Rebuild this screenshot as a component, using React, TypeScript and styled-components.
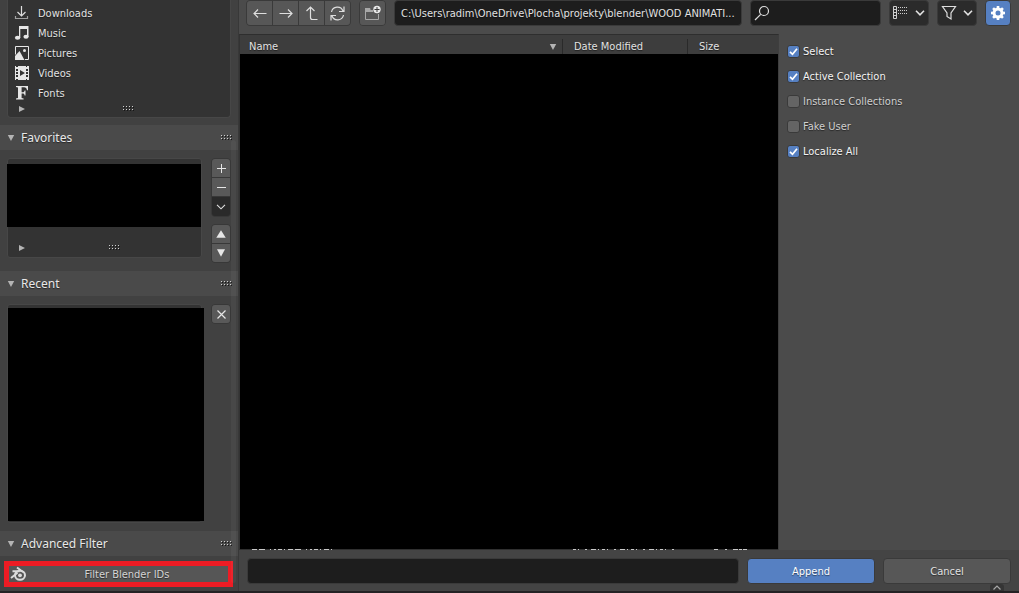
import React from "react";
import styled, { createGlobalStyle, css } from "styled-components";

const Global = createGlobalStyle`
  * { box-sizing: border-box; }
  body {
    margin: 0;
    background: #4b4b4b;
    color: #e2e2e2;
    font-family: "DejaVu Sans Condensed", "DejaVu Sans", sans-serif;
    font-stretch: condensed;
    font-size: 11px;
    line-height: 17px;
    text-shadow: 0 1px 1px rgba(0, 0, 0, 0.5);
  }
  button, input { font: inherit; color: inherit; text-shadow: inherit; }
  button { padding: 0; border: 0; background: none; }
  ul { list-style: none; margin: 0; padding: 0; }
  h2 { margin: 0; font: inherit; }
  svg { display: block; flex: none; }
`;

const Window = styled.div`
  display: grid;
  grid-template-columns: 239px minmax(0, 1fr);
  min-height: 100vh;
  border-bottom: 2px solid #242224;
`;

/* Sidebar */

const Sidebar = styled.aside`
  position: relative;
  display: flex;
  flex-direction: column;
  background: #414141;
  border-right: 1px solid #383838;
`;

const Scrollbar = styled.div`
  position: absolute;
  top: 140px;
  bottom: 8px;
  right: 2px;
  width: 5px;
  border-radius: 3px;
  background: rgba(255, 255, 255, 0.04);
`;

const listBox = css`
  background: #333333;
  border: 1px solid #474747;
  border-radius: 3px;
`;

const Bookmarks = styled.div`
  ${listBox}
  border-top: 0;
  border-radius: 0 0 4px 4px;
  margin: 0 7px 7px;
  padding: 3px 0 0 6px;
  height: 118px;
`;

const Place = styled.button`
  display: flex;
  align-items: center;
  gap: 9px;
  width: 100%;
  height: 20px;
  text-align: left;
`;

const ListFooter = styled.div`
  display: flex;
  align-items: center;
  height: 11px;
  padding-left: 4px;
`;

const GripSlot = styled.span<{ $offset: number }>`
  margin-left: ${(p) => p.$offset}px;
`;

const PanelHeader = styled.div`
  display: flex;
  align-items: center;
  justify-content: space-between;
  height: 25px;
  padding: 1px 6px 0 7px;
  background: #4a4a4a;
`;

const PanelToggle = styled.button`
  display: flex;
  align-items: center;
  gap: 6px;
  font-family: "Noto Sans", "Open Sans", sans-serif;
  font-size: 12px;
  line-height: 18px;
  color: #e8e8e8;
`;

const PanelBody = styled.div<{ $grow?: boolean }>`
  display: flex;
  flex: ${(p) => (p.$grow ? "1 0 auto" : "none")};
  align-items: ${(p) => (p.$grow ? "stretch" : "flex-start")};
  gap: 9px;
  padding: 8px 7px;
`;

const FavoritesBox = styled.div`
  ${listBox}
  flex: 1;
  height: 100px;
  padding-top: 5px;
`;

const Redacted = styled.div`
  background: #000;
`;

const FavoritesItems = styled(Redacted)`
  height: 63px;
  margin: 0 0 15px -1px;
`;

const RecentBox = styled.div`
  ${listBox}
  display: flex;
  flex: 1;
  min-height: 217px;
  padding: 3px 0 1px;
`;

const RecentItems = styled(Redacted)`
  flex: 1;
  margin-right: -3px;
`;

const ButtonColumn = styled.div`
  display: flex;
  flex-direction: column;
  gap: 7px;
  width: 20px;
`;

const Stack = styled.div`
  display: flex;
  flex-direction: column;
  gap: 1px;
  border: 1px solid #383838;
  border-radius: 4px;
  background: #383838;
  overflow: hidden;
`;

const SmallButton = styled.button<{ $dark?: boolean }>`
  display: flex;
  align-items: center;
  justify-content: center;
  height: ${(p) => (p.$dark ? 19 : 18)}px;
  background: ${(p) => (p.$dark ? "#2a2a2a" : "#595959")};
`;

const FilterRow = styled.div`
  padding: 5px 5px 4px 4px;
`;

const FilterButton = styled.button`
  display: flex;
  align-items: center;
  width: 100%;
  height: 26px;
  padding: 0 1px;
  border: 5px solid #ed1c24;
  background: #565656;
  outline: 0;
  span { flex: 1; text-align: center; color: #d5d5d5; }
`;

/* Browser area */

const Browser = styled.main`
  display: flex;
  flex-direction: column;
  min-width: 0;
`;

const Toolbar = styled.div`
  display: flex;
  align-items: flex-start;
  gap: 8px;
  height: 34px;
  padding: 0 8px 0 7px;
`;

const control = css`
  height: 26px;
  border: 1px solid #3a3a3a;
  border-radius: 4px;
`;

const NavGroup = styled.div`
  ${control}
  display: flex;
  gap: 1px;
  background: #3a3a3a;
  overflow: hidden;
`;

const NavButton = styled.button`
  display: flex;
  align-items: center;
  justify-content: center;
  width: 25px;
  background: #575757;
`;

const PathField = styled.input`
  ${control}
  flex: 1;
  min-width: 0;
  padding: 0 6px;
  background: #1d1d1d;
  text-overflow: ellipsis;
  outline: 0;
`;

const SearchBox = styled.label`
  ${control}
  display: flex;
  align-items: center;
  width: 131px;
  padding-left: 3px;
  background: #1d1d1d;
  input { width: 100px; border: 0; background: none; outline: 0; }
`;

const MenuButton = styled.button`
  ${control}
  display: flex;
  align-items: center;
  justify-content: space-between;
  width: 40px;
  padding: 0 3px;
  background: #2b2b2b;
`;

const SettingsButton = styled.button`
  ${control}
  display: flex;
  align-items: center;
  justify-content: center;
  width: 26px;
  background: #5680c2;
`;

const Content = styled.div`
  display: grid;
  grid-template-columns: minmax(0, 9fr) minmax(0, 4fr);
  flex: 1;
`;

const FileList = styled.section`
  display: flex;
  flex-direction: column;
  border-top: 1px solid #2e2e2e;
  border-right: 1px solid #3e3e3e;
  border-left: 1px solid #333333;
  background: #303030;
`;

const Columns = styled.div`
  display: grid;
  grid-template-columns: minmax(0, 1fr) 125px 91px;
  align-items: end;
  height: 19px;
  background: #3d3d3d;
`;

const Column = styled.button<{ $first?: boolean }>`
  display: flex;
  align-items: center;
  justify-content: space-between;
  height: 15px;
  padding: 0 ${(p) => (p.$first ? 5 : 8)}px 0 ${(p) => (p.$first ? 9 : 11)}px;
  border-left: ${(p) => (p.$first ? 0 : 1)}px solid #2a2a2a;
`;

const Files = styled(Redacted)`
  flex: 1;
`;

const Options = styled.section`
  padding: 5px 0 0 8px;
`;

const Option = styled.label`
  display: flex;
  align-items: center;
  gap: 3px;
  height: 25px;
`;

const Check = styled.input`
  appearance: none;
  width: 13px;
  height: 13px;
  margin: 0;
  border: 1px solid #3a3a3a;
  border-radius: 3px;
  background: #646464;
  &:checked { background: #5680c2; }
`;

const CheckCell = styled.span`
  display: grid;
  > * { grid-area: 1 / 1; }
  svg { pointer-events: none; }
`;

const OptionText = styled.span<{ $on: boolean }>`
  color: ${(p) => (p.$on ? "#f4f4f4" : "#d0d0d0")};
`;

const Footer = styled.footer`
  position: relative;
  display: flex;
  gap: 8px;
  height: 41px;
  padding: 8px 8px 0;
  background: #444444;
`;

const FileName = styled.input`
  ${control}
  flex: 1;
  min-width: 0;
  padding: 0 8px;
  background: #1d1d1d;
  outline: 0;
`;

const ActionButton = styled.button<{ $primary?: boolean }>`
  ${control}
  width: 128px;
  background: ${(p) => (p.$primary ? "#5680c2" : "#575757")};
  color: ${(p) => (p.$primary ? "#ffffff" : "#e2e2e2")};
`;

const RegionTab = styled.button`
  position: absolute;
  right: 15px;
  bottom: 0;
  width: 14px;
  height: 7px;
  border-radius: 3px 3px 0 0;
  background: #353535;
`;

/* Glyphs */

const stroke = { fill: "none", stroke: "#dedede", strokeWidth: 1.2 } as const;

const Triangle = ({ dir, color = "#b4b4b4", size = 8 }: { dir: "up" | "down" | "right"; color?: string; size?: number }) => (
  <svg width={size} height={size} viewBox="0 0 8 8">
    <path
      fill={color}
      d={dir === "up" ? "M4 1L7.8 7H.2z" : dir === "down" ? "M4 7L.8 1h6.4z" : "M1 1v6l6-3z"}
    />
  </svg>
);

const Grip = () => (
  <svg width="11" height="6" viewBox="0 0 11 6">
    {[0, 3, 6, 9].map((x) =>
      [0, 3].map((y) => (
        <g key={`${x}-${y}`}>
          <rect x={x + 1} y={y + 1} width="1" height="1" fill="#151515" />
          <rect x={x} y={y} width="1" height="1" fill="#d0d0d0" />
        </g>
      ))
    )}
  </svg>
);

const Chevron = ({ thin = false }: { thin?: boolean }) => (
  <svg width="10" height="6" viewBox="0 0 10 6">
    <path d="M1 .8l4 4 4-4" fill="none" stroke="#e2e2e2" strokeWidth={thin ? 1.1 : 1.6} />
  </svg>
);

const placeIcons: Record<string, React.ReactNode> = {
  Downloads: (
    <g {...stroke}>
      <path d="M7.5 1v9.5M3.5 7l4 4 4-4" />
      <path d="M1.5 11v2.5h12V11" stroke="#a0a0a0" />
    </g>
  ),
  Music: (
    <g fill="#e6e6e6">
      <path d="M5 1h9.5v11H13V4H6.300v9H5z" />
      <ellipse cx="3.600" cy="12.700" rx="2.700" ry="2" />
      <ellipse cx="12" cy="11.800" rx="2.600" ry="2" />
    </g>
  ),
  Pictures: (
    <g fill="#e6e6e6">
      <path d="M11 14.500h3.500V1.500h-13v8" fill="none" stroke="#e6e6e6" />
      <path d="M1 15v-4l4.500-5L10.500 15z" />
      <circle cx="10.500" cy="5.500" r="1.500" />
    </g>
  ),
  Videos: (
    <path
      fill="#e6e6e6"
      fillRule="evenodd"
      d="M1 1h1v1h2V1h8v1h1V1h2v14h-2v-1h-1v1H4v-1H2v1H1zM2 4v2h2V4zM2 7v2h2V7zM2 10v2h2v-2zM12 4v2h2V4zM12 7v2h2V7zM12 10v2h2v-2zM6 5v6l5-3z"
    />
  ),
  Fonts: (
    <path
      fill="#e6e6e6"
      d="M2 1h12v4.200h-1C12.600 3 11.800 2.300 10 2.300H7.600v5h1c1.300 0 1.800-.6 2-1.800h.9v5h-.9c-.2-1.300-.7-1.900-2-1.900h-1V13l2 .6v1H2v-1l2-.6V2.600L2 2z"
    />
  ),
};

const BlenderLogo = () => (
  <svg width="17" height="16" viewBox="0 0 17 16">
    <path
      fill="none"
      stroke="#dcdcdc"
      strokeWidth="1.900"
      strokeLinejoin="round"
      d="M1 12l6.500-5.300M2.500 5.300h7M7 1.500l6 4.500"
    />
    <ellipse cx="10" cy="9.300" rx="5" ry="4.500" fill="none" stroke="#dcdcdc" strokeWidth="2" />
    <circle cx="10" cy="9.300" r="1.900" fill="#dcdcdc" />
  </svg>
);

const navItems: { label: string; path: string }[] = [
  { label: "Back", path: "M2 8.500h12.500M6 4.500l-4 4 4 4" },
  { label: "Forward", path: "M1.500 8.500H14M10 4.500l4 4-4 4" },
  { label: "Parent directory", path: "M2.500 6l4-4 4 4M6.500 2v10.500q0 2 2 2h5" },
  {
    label: "Refresh",
    path: "M1.500 7A6 6 0 0 1 13 6M14 1.500V6.500H9M13.500 10A6 6 0 0 1 2 11M1 15.500V10.500H6",
  },
];

/* Tops of the row that the list cuts off at its lower edge */
const CutRow = () => (
  <svg width="100%" height="1" shapeRendering="crispEdges">
    <g stroke="#c8c8c8" strokeWidth="2">
      <path d="M12 0h80" strokeDasharray="5 2 6 5 1 3 2 2 4 2 1 3" />
      <path d="M333 0h103" strokeDasharray="3 2 1 6 2 4 5 2 1 3" />
      <path d="M474 0h38" strokeDasharray="4 7 2 6 5 1 3 1" />
    </g>
  </svg>
);

const options = [
  { label: "Select", on: true },
  { label: "Active Collection", on: true },
  { label: "Instance Collections", on: false },
  { label: "Fake User", on: false },
  { label: "Localize All", on: true },
];

const Header = ({ title }: { title: string }) => (
  <PanelHeader>
    <h2>
      <PanelToggle aria-expanded="true">
        <Triangle dir="down" />
        {title}
      </PanelToggle>
    </h2>
    <Grip />
  </PanelHeader>
);

export default function App() {
  return (
    <>
      <Global />
      <Window>
        <Sidebar>
          <Bookmarks>
            <ul>
              {Object.keys(placeIcons).map((name) => (
                <li key={name}>
                  <Place>
                    <svg width="15" height="16" viewBox="0 0 15 16">{placeIcons[name]}</svg>
                    {name}
                  </Place>
                </li>
              ))}
            </ul>
            <ListFooter>
              <Triangle dir="right" />
              <GripSlot $offset={97}><Grip /></GripSlot>
            </ListFooter>
          </Bookmarks>

          <Header title="Favorites" />
          <PanelBody>
            <FavoritesBox>
              <FavoritesItems />
              <ListFooter>
                <GripSlot $offset={6}><Triangle dir="right" /></GripSlot>
                <GripSlot $offset={83}><Grip /></GripSlot>
              </ListFooter>
            </FavoritesBox>
            <ButtonColumn>
              <Stack>
                <SmallButton aria-label="Add">
                  <svg width="9" height="9"><path d="M0 4.500h9M4.500 0v9" stroke="#e6e6e6" /></svg>
                </SmallButton>
                <SmallButton aria-label="Remove">
                  <svg width="9" height="9"><path d="M0 4.500h9" stroke="#e6e6e6" /></svg>
                </SmallButton>
                <SmallButton aria-label="More" $dark><Chevron thin /></SmallButton>
              </Stack>
              <Stack>
                <SmallButton aria-label="Move up"><Triangle dir="up" color="#e6e6e6" size={10} /></SmallButton>
                <SmallButton aria-label="Move down"><Triangle dir="down" color="#e6e6e6" size={10} /></SmallButton>
              </Stack>
            </ButtonColumn>
          </PanelBody>

          <Header title="Recent" />
          <PanelBody $grow>
            <RecentBox><RecentItems /></RecentBox>
            <ButtonColumn>
              <Stack>
                <SmallButton aria-label="Clear recent">
                  <svg width="9" height="9"><path d="M.5 .5l8 8M8.500 .5l-8 8" stroke="#e6e6e6" strokeWidth="1.200" /></svg>
                </SmallButton>
              </Stack>
            </ButtonColumn>
          </PanelBody>

          <Header title="Advanced Filter" />
          <FilterRow>
            <FilterButton>
              <BlenderLogo />
              <span>Filter Blender IDs</span>
            </FilterButton>
          </FilterRow>
          <Scrollbar />
        </Sidebar>

        <Browser>
          <Toolbar>
            <NavGroup>
              {navItems.map((n) => (
                <NavButton key={n.label} aria-label={n.label}>
                  <svg width="16" height="17" viewBox="0 0 16 17"><path {...stroke} d={n.path} /></svg>
                </NavButton>
              ))}
            </NavGroup>
            <NavGroup>
              <NavButton aria-label="New folder">
                <svg width="16" height="16" viewBox="0 0 16 16">
                  <path d="M.5 14.500v-11h4.500v2h3M13.500 9v5.500h-13" fill="none" stroke="#a8a8a8" />
                  <path d="M0 3h5v2h3v2H0z" fill="#a8a8a8" />
                  <circle cx="12" cy="4.500" r="3.700" fill="#e8e8e8" />
                  <path d="M12 2v5M9.500 4.500h5" stroke="#3c3c3c" />
                </svg>
              </NavButton>
            </NavGroup>
            <PathField
              aria-label="Directory"
              readOnly
              value="C:\Users\radim\OneDrive\Plocha\projekty\blender\WOOD ANIMATI..."
            />
            <SearchBox>
              <svg width="16" height="16" viewBox="0 0 16 16">
                <circle cx="10" cy="6" r="4.500" {...stroke} />
                <path d="M6.700 9.300L1 15" {...stroke} />
              </svg>
              <input aria-label="Search" />
            </SearchBox>
            <MenuButton aria-label="Display mode" aria-haspopup="menu">
              <svg width="16" height="14" viewBox="0 0 16 14">
                <path d="M.5 .5h3v12h-3zM.5 3.500h3M.5 6.500h3M.5 9.500h3" fill="none" stroke="#cfcfcf" />
                <path d="M5 1.500h10M5 4.500h10M5 7.500h10" stroke="#cfcfcf" strokeDasharray="1 1" />
              </svg>
              <Chevron />
            </MenuButton>
            <MenuButton aria-label="Filter" aria-haspopup="menu">
              <svg width="16" height="16" viewBox="0 0 16 16">
                <path d="M1.500 1.500h13L10 8v6l-4-2.500V8z" {...stroke} />
              </svg>
              <Chevron />
            </MenuButton>
            <SettingsButton aria-label="Toggle options">
              <svg width="16" height="16" viewBox="0 0 16 16">
                <circle cx="8" cy="8" r="4" fill="none" stroke="#fff" strokeWidth="3" />
                {[0, 45, 90, 135, 180, 225, 270, 315].map((a) => (
                  <rect key={a} x="6.700" y="1" width="2.600" height="3" fill="#fff" transform={`rotate(${a} 8 8)`} />
                ))}
              </svg>
            </SettingsButton>
          </Toolbar>

          <Content>
            <FileList>
              <Columns>
                <Column $first>Name<Triangle dir="down" /></Column>
                <Column>Date Modified</Column>
                <Column>Size</Column>
              </Columns>
              <Files />
              <CutRow />
            </FileList>
            <Options>
              {options.map((o) => (
                <Option key={o.label}>
                  <CheckCell>
                    <Check type="checkbox" defaultChecked={o.on} />
                    {o.on && (
                      <svg width="13" height="13" viewBox="0 0 13 13">
                        <path d="M3 6.800l2.500 2.500L10 3.700" fill="none" stroke="#fff" strokeWidth="1.700" />
                      </svg>
                    )}
                  </CheckCell>
                  <OptionText $on={o.on}>{o.label}</OptionText>
                </Option>
              ))}
            </Options>
          </Content>

          <Footer>
            <FileName aria-label="File name" />
            <ActionButton $primary>Append</ActionButton>
            <ActionButton>Cancel</ActionButton>
            <RegionTab aria-label="Show region">
              <svg width="14" height="7" viewBox="0 0 14 7">
                <path d="M3.500 5.500L7 2l3.500 3.500" fill="none" stroke="#a8a8a8" strokeWidth="1.200" />
              </svg>
            </RegionTab>
          </Footer>
        </Browser>
      </Window>
    </>
  );
}
